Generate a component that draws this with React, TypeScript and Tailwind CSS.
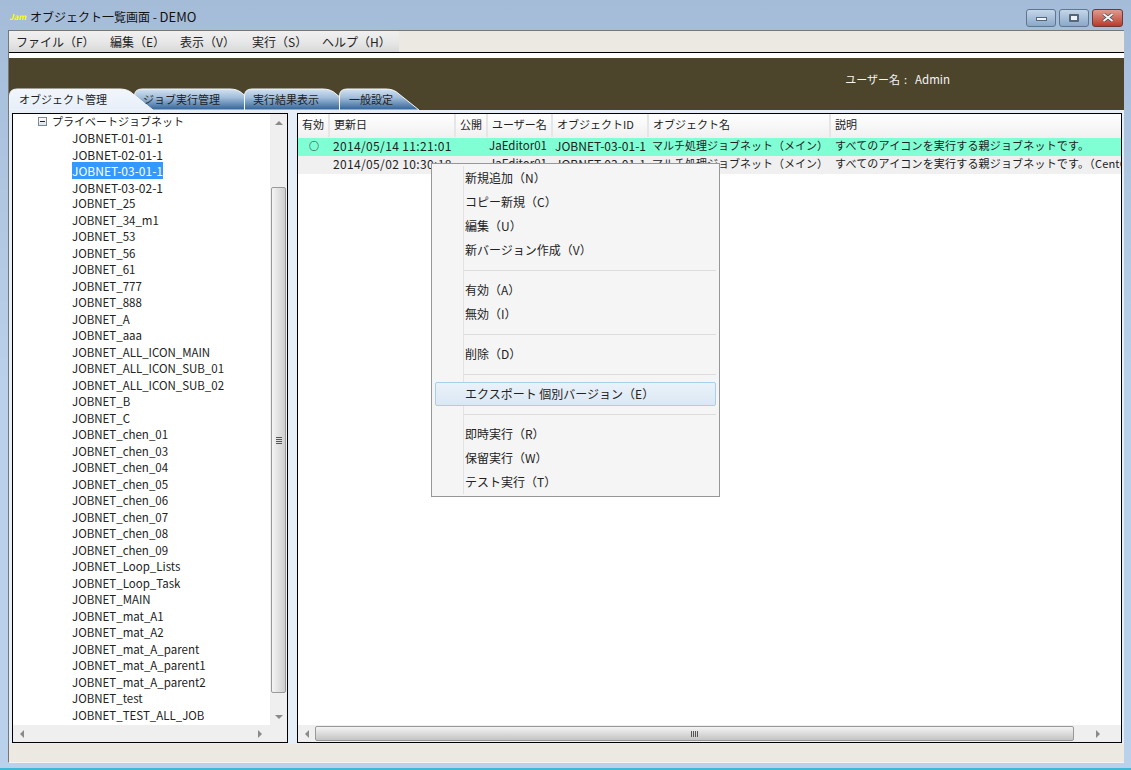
import React from 'react'

const font = { fontFamily: '"Noto Sans CJK JP", "DejaVu Sans", sans-serif' }

const treeItems = [
  'JOBNET-01-01-1', 'JOBNET-02-01-1', 'JOBNET-03-01-1', 'JOBNET-03-02-1', 'JOBNET_25', 'JOBNET_34_m1',
  'JOBNET_53', 'JOBNET_56', 'JOBNET_61', 'JOBNET_777', 'JOBNET_888', 'JOBNET_A', 'JOBNET_aaa',
  'JOBNET_ALL_ICON_MAIN', 'JOBNET_ALL_ICON_SUB_01', 'JOBNET_ALL_ICON_SUB_02', 'JOBNET_B', 'JOBNET_C',
  'JOBNET_chen_01', 'JOBNET_chen_03', 'JOBNET_chen_04', 'JOBNET_chen_05', 'JOBNET_chen_06', 'JOBNET_chen_07',
  'JOBNET_chen_08', 'JOBNET_chen_09', 'JOBNET_Loop_Lists', 'JOBNET_Loop_Task', 'JOBNET_MAIN', 'JOBNET_mat_A1',
  'JOBNET_mat_A2', 'JOBNET_mat_A_parent', 'JOBNET_mat_A_parent1', 'JOBNET_mat_A_parent2', 'JOBNET_test',
  'JOBNET_TEST_ALL_JOB'
]

const menuBar = ['ファイル（F）', '編集（E）', '表示（V）', '実行（S）', 'ヘルプ（H）']

const columns = [
  { label: '有効', w: 'w-[32px]' },
  { label: '更新日', w: 'w-[126px]' },
  { label: '公開', w: 'w-[32px]' },
  { label: 'ユーザー名', w: 'w-[65px]' },
  { label: 'オブジェクトID', w: 'w-[96px]' },
  { label: 'オブジェクト名', w: 'w-[182px]' },
  { label: '説明', w: 'flex-1' }
]

const rows = [
  {
    active: true,
    date: '2014/05/14 11:21:01',
    desc: 'すべてのアイコンを実行する親ジョブネットです。'
  },
  {
    active: false,
    date: '2014/05/02 10:30:18',
    desc: 'すべてのアイコンを実行する親ジョブネットです。（CentOS）'
  }
]

function Tab({ label, active, w, textX }: { label: string; active?: boolean; w: number; textX: number }) {
  const id = `tab-${w}`
  const d = `M0.5 22 L0.5 8 Q0.5 1 8 1 L${w - 34} 1 Q${w - 26} 1 ${w - 21} 6 L${w - 1} 22 Z`
  return (
    <div className="relative h-[22px] shrink-0" style={{ width: w }}>
      <svg className="absolute inset-0" width={w} height={22}>
        <defs>
          <linearGradient id={id} x1="0" y1="0" x2="0" y2="1">
            {active ? <stop offset="0" stopColor="#f2f6fb" /> : <stop offset="0" stopColor="#d3e2f1" />}
            {active ? <stop offset="1" stopColor="#e6eff8" /> : <stop offset="0.4" stopColor="#a3bfdb" />}
            {!active && <stop offset="1" stopColor="#2f6197" />}
          </linearGradient>
        </defs>
        <path d={d} fill={`url(#${id})`} stroke="#f4f7fb" strokeWidth="1" />
      </svg>
      <span className="absolute top-[2px] text-[11px] leading-[18px] text-[#222]" style={{ left: textX }}>
        {label}
      </span>
    </div>
  )
}

function Arrow({ dir }: { dir: 'up' | 'down' | 'left' | 'right' }) {
  const pts = { up: '0,5 4,1 8,5', down: '0,1 8,1 4,5', left: '5,0 5,8 1,4', right: '1,0 1,8 5,4' }[dir]
  const size = dir === 'up' || dir === 'down' ? 'w-[8px] h-[6px]' : 'w-[6px] h-[8px]'
  return (
    <svg className={size} viewBox={dir === 'up' || dir === 'down' ? '0 0 8 6' : '0 0 6 8'}>
      <polygon points={pts} fill="#8a8a8a" />
    </svg>
  )
}

function MenuItem({ label, hover }: { label: string; hover?: boolean }) {
  return (
    <div
      className={`mx-[3px] h-[24px] pl-[29px] pb-[1px] flex items-center text-[12px] text-[#222] rounded-[2px] border ${
        hover ? 'bg-gradient-to-b from-[#eaf2f9] to-[#dbe8f4] border-[#a8d0e8]' : 'border-transparent'
      }`}
    >
      {label}
    </div>
  )
}

function MenuSep() {
  return <div className="ml-[32px] mr-[3px] my-[7.5px] h-px bg-[#dcdcdc]" />
}

export default function App() {
  return (
    <div
      className="relative w-[1131px] h-[770px] overflow-hidden bg-gradient-to-b from-[#a5bcd9] via-[#b9d1ea] to-[#b9d1ea] flex flex-col"
      style={font}
    >
      {/* title bar */}
      <div className="h-[30px] shrink-0 flex items-center pl-[9px] pr-[8px]">
        <span className="text-[8px] font-bold italic text-[#ffff00] w-[21px] mt-[3px]">Jam</span>
        <span className="text-[12px] text-[#111] mt-[3px]">
          オブジェクト一覧画面 - <span className="text-[13px]">DEMO</span>
        </span>
        <div className="ml-auto flex gap-[3px] mt-[5px]">
          <div className="w-[30px] h-[18px] rounded-[3px] border border-[#5f7690] bg-gradient-to-b from-[#c5d6e8] to-[#8aa8c8] flex items-center justify-center">
            <div className="w-[11px] h-[4px] mt-[3px] bg-[#eef3f8] border border-[#56677c]" />
          </div>
          <div className="w-[30px] h-[18px] rounded-[3px] border border-[#5f7690] bg-gradient-to-b from-[#c5d6e8] to-[#8aa8c8] flex items-center justify-center">
            <div className="w-[10px] h-[8px] bg-[#eef3f8] border-2 border-[#56677c] rounded-[1px]" />
          </div>
          <div className="w-[31px] h-[18px] rounded-[3px] border border-[#6a3a36] bg-gradient-to-b from-[#dd9a8e] to-[#b9382a] flex items-center justify-center">
            <svg className="w-[12px] h-[9px]" viewBox="0 0 12 9">
              <path d="M1.5 1 L10.5 8 M10.5 1 L1.5 8" stroke="#3a4a5c" strokeWidth="3.2" />
              <path d="M1.5 1 L10.5 8 M10.5 1 L1.5 8" stroke="#f4f4f4" strokeWidth="2" />
            </svg>
          </div>
        </div>
      </div>

      {/* client area */}
      <div className="mx-[8px] w-[1116px] h-[733px] shrink-0 flex flex-col bg-[#ece9e3] border-t border-l border-b border-[#777] border-b-[#f4f4f4]">
        <div className="h-[21px] shrink-0 flex">
          <div className="w-[390px] bg-gradient-to-b from-[#f0f0f0] via-[#e8e8e8] to-[#d8d8d8] flex items-center pl-[7px] text-[12px] text-[#222]">
            {menuBar.map((m, i) => (
              <span key={m} className={['w-[94px]', 'w-[70px]', 'w-[72px]', 'w-[70px]', ''][i]}>
                {m}
              </span>
            ))}
          </div>
        </div>
        <div className="h-px shrink-0 bg-black" />
        <div className="h-[5px] shrink-0 bg-white" />
        {/* header band with user name and tabs */}
        <div className="h-[52px] shrink-0 bg-[#4d442c] flex flex-col">
          <div className="h-[30px] shrink-0 flex items-center justify-end pr-[174px] pt-[13px] text-[11px] text-[#f4f4f4]">
            <span>ユーザー名</span>
            <span className="ml-[4px]">:</span>
            <span className="ml-[8px] text-[11.5px]">Admin</span>
          </div>
          <div className="h-[22px] shrink-0 flex items-end">
            <div className="relative z-10"><Tab label="オブジェクト管理" active w={145} textX={10} /></div>
            <div className="-ml-[20px]"><Tab label="ジョブ実行管理" w={130} textX={9} /></div>
            <div className="-ml-[20px]"><Tab label="実行結果表示" w={113} textX={9} /></div>
            <div className="-ml-[18px]"><Tab label="一般設定" w={81} textX={10} /></div>
          </div>
        </div>

        {/* panels */}
        <div className="h-[634px] shrink-0 bg-[#e6eff8] flex pt-[3px] pl-[3px] gap-[9px]">
          {/* tree */}
          <div className="w-[276px] h-[630px] border border-black bg-white flex flex-col shrink-0">
            <div className="flex-1 flex min-h-0">
              <div className="flex-1 overflow-hidden text-[11.5px] text-[#222]">
                <div className="h-[15px] pl-[25px] flex items-center gap-[5px] text-[11px]">
                  <span className="w-[9px] h-[9px] border border-[#7a8a99] bg-gradient-to-b from-white to-[#dde3ea] flex items-center justify-center">
                    <span className="w-[5px] h-px bg-[#222]" />
                  </span>
                  プライベートジョブネット
                </div>
                <div className="pl-[59px]">
                  {treeItems.map(t => (
                    <div key={t} className="h-[16.5px] leading-[17px]">
                      <span
                        className={`inline-block h-[16.5px] ${t.includes('-') ? 'text-[12px]' : ''} ${
                          t === 'JOBNET-03-01-1' ? 'bg-[#3399ff] text-white' : ''
                        }`}
                      >
                        {t}
                      </span>
                    </div>
                  ))}
                </div>
              </div>
              <div className="w-[17px] shrink-0 bg-[#efefef] flex flex-col items-center">
                <div className="h-[17px] flex items-center justify-center"><Arrow dir="up" /></div>
                <div className="mt-[56px] w-[15px] h-[506px] rounded-[2px] border border-[#999] bg-gradient-to-r from-[#f4f4f4] to-[#cfcfcf] flex flex-col items-center justify-center gap-px">
                  <span className="w-[6px] h-px bg-[#555]" />
                  <span className="w-[6px] h-px bg-[#555]" />
                  <span className="w-[6px] h-px bg-[#555]" />
                  <span className="w-[6px] h-px bg-[#555]" />
                </div>
                <div className="mt-auto h-[17px] flex items-center justify-center"><Arrow dir="down" /></div>
              </div>
            </div>
            <div className="h-[17px] shrink-0 flex bg-[#efefef] items-center">
              <div className="flex-1 flex items-center justify-between pl-[6px] pr-[24px]">
                <Arrow dir="left" />
                <Arrow dir="right" />
              </div>
            </div>
          </div>

          {/* object list */}
          <div className="w-[825px] h-[630px] border border-black bg-white flex flex-col shrink-0 overflow-hidden">
            <div className="h-[24px] shrink-0 flex pb-[1px] bg-gradient-to-b from-white to-[#f0f0f0] text-[11px] text-[#222]">
              {columns.map(c => (
                <div key={c.label} className={`${c.w} pl-[4px] pb-[2px] flex items-center border-r-2 border-[#e6e6e6] last:border-r-0`}>
                  {c.label}
                </div>
              ))}
            </div>
            {rows.map(r => (
              <div
                key={r.date}
                className={`h-[18px] shrink-0 flex items-center whitespace-nowrap text-[11px] text-[#222] overflow-hidden pb-[3px] ${
                  r.active ? 'bg-[#80ffd4]' : 'bg-[#f0f0f0]'
                }`}
              >
                <div className="w-[32px] shrink-0 flex justify-center text-[10px] font-bold">{r.active ? '○' : ''}</div>
                <div className="w-[157px] shrink-0 pl-[3px] text-[12px] tracking-[0.35px]">{r.date}</div>
                <div className="w-[66px] shrink-0 pl-[2px] text-[11.5px]">JaEditor01</div>
                <div className="w-[97px] shrink-0 pl-[2px] text-[12px]">JOBNET-03-01-1</div>
                <div className="w-[183px] shrink-0 pl-[2px]">マルチ処理ジョブネット（メイン）</div>
                <div className="pl-[2px] tracking-[0.18px]">{r.desc}</div>
              </div>
            ))}
            <div className="flex-1" />
            <div className="h-[17px] shrink-0 flex items-center bg-[#efefef]">
              <div className="w-[17px] flex justify-center"><Arrow dir="left" /></div>
              <div className="w-[759px] h-[15px] rounded-[2px] border border-[#999] bg-gradient-to-b from-[#f4f4f4] to-[#c4c4c4] flex items-center justify-center gap-px">
                <span className="w-px h-[6px] bg-[#555]" />
                <span className="w-px h-[6px] bg-[#555]" />
                <span className="w-px h-[6px] bg-[#555]" />
                <span className="w-px h-[6px] bg-[#555]" />
              </div>
              <div className="flex-1 flex justify-center"><Arrow dir="right" /></div>
            </div>
          </div>
        </div>

        <div className="flex-1" />
      </div>

      <div className="flex-1" />
      <div className="h-[2px] shrink-0 bg-[#3fb8d8]" />

      {/* context menu */}
      <div className="absolute left-[431px] top-[163px] w-[289px] h-[334px] border border-[#979797] bg-[#f5f5f5] py-[2px]">
        <div className="absolute left-[31px] top-[2px] bottom-[2px] w-px bg-[#e2e2e2]" />
        <div className="relative">
          <MenuItem label="新規追加（N）" />
          <MenuItem label="コピー新規（C）" />
          <MenuItem label="編集（U）" />
          <MenuItem label="新バージョン作成（V）" />
          <MenuSep />
          <MenuItem label="有効（A）" />
          <MenuItem label="無効（I）" />
          <MenuSep />
          <MenuItem label="削除（D）" />
          <MenuSep />
          <MenuItem label="エクスポート 個別バージョン（E）" hover />
          <MenuSep />
          <MenuItem label="即時実行（R）" />
          <MenuItem label="保留実行（W）" />
          <MenuItem label="テスト実行（T）" />
        </div>
      </div>
    </div>
  )
}
